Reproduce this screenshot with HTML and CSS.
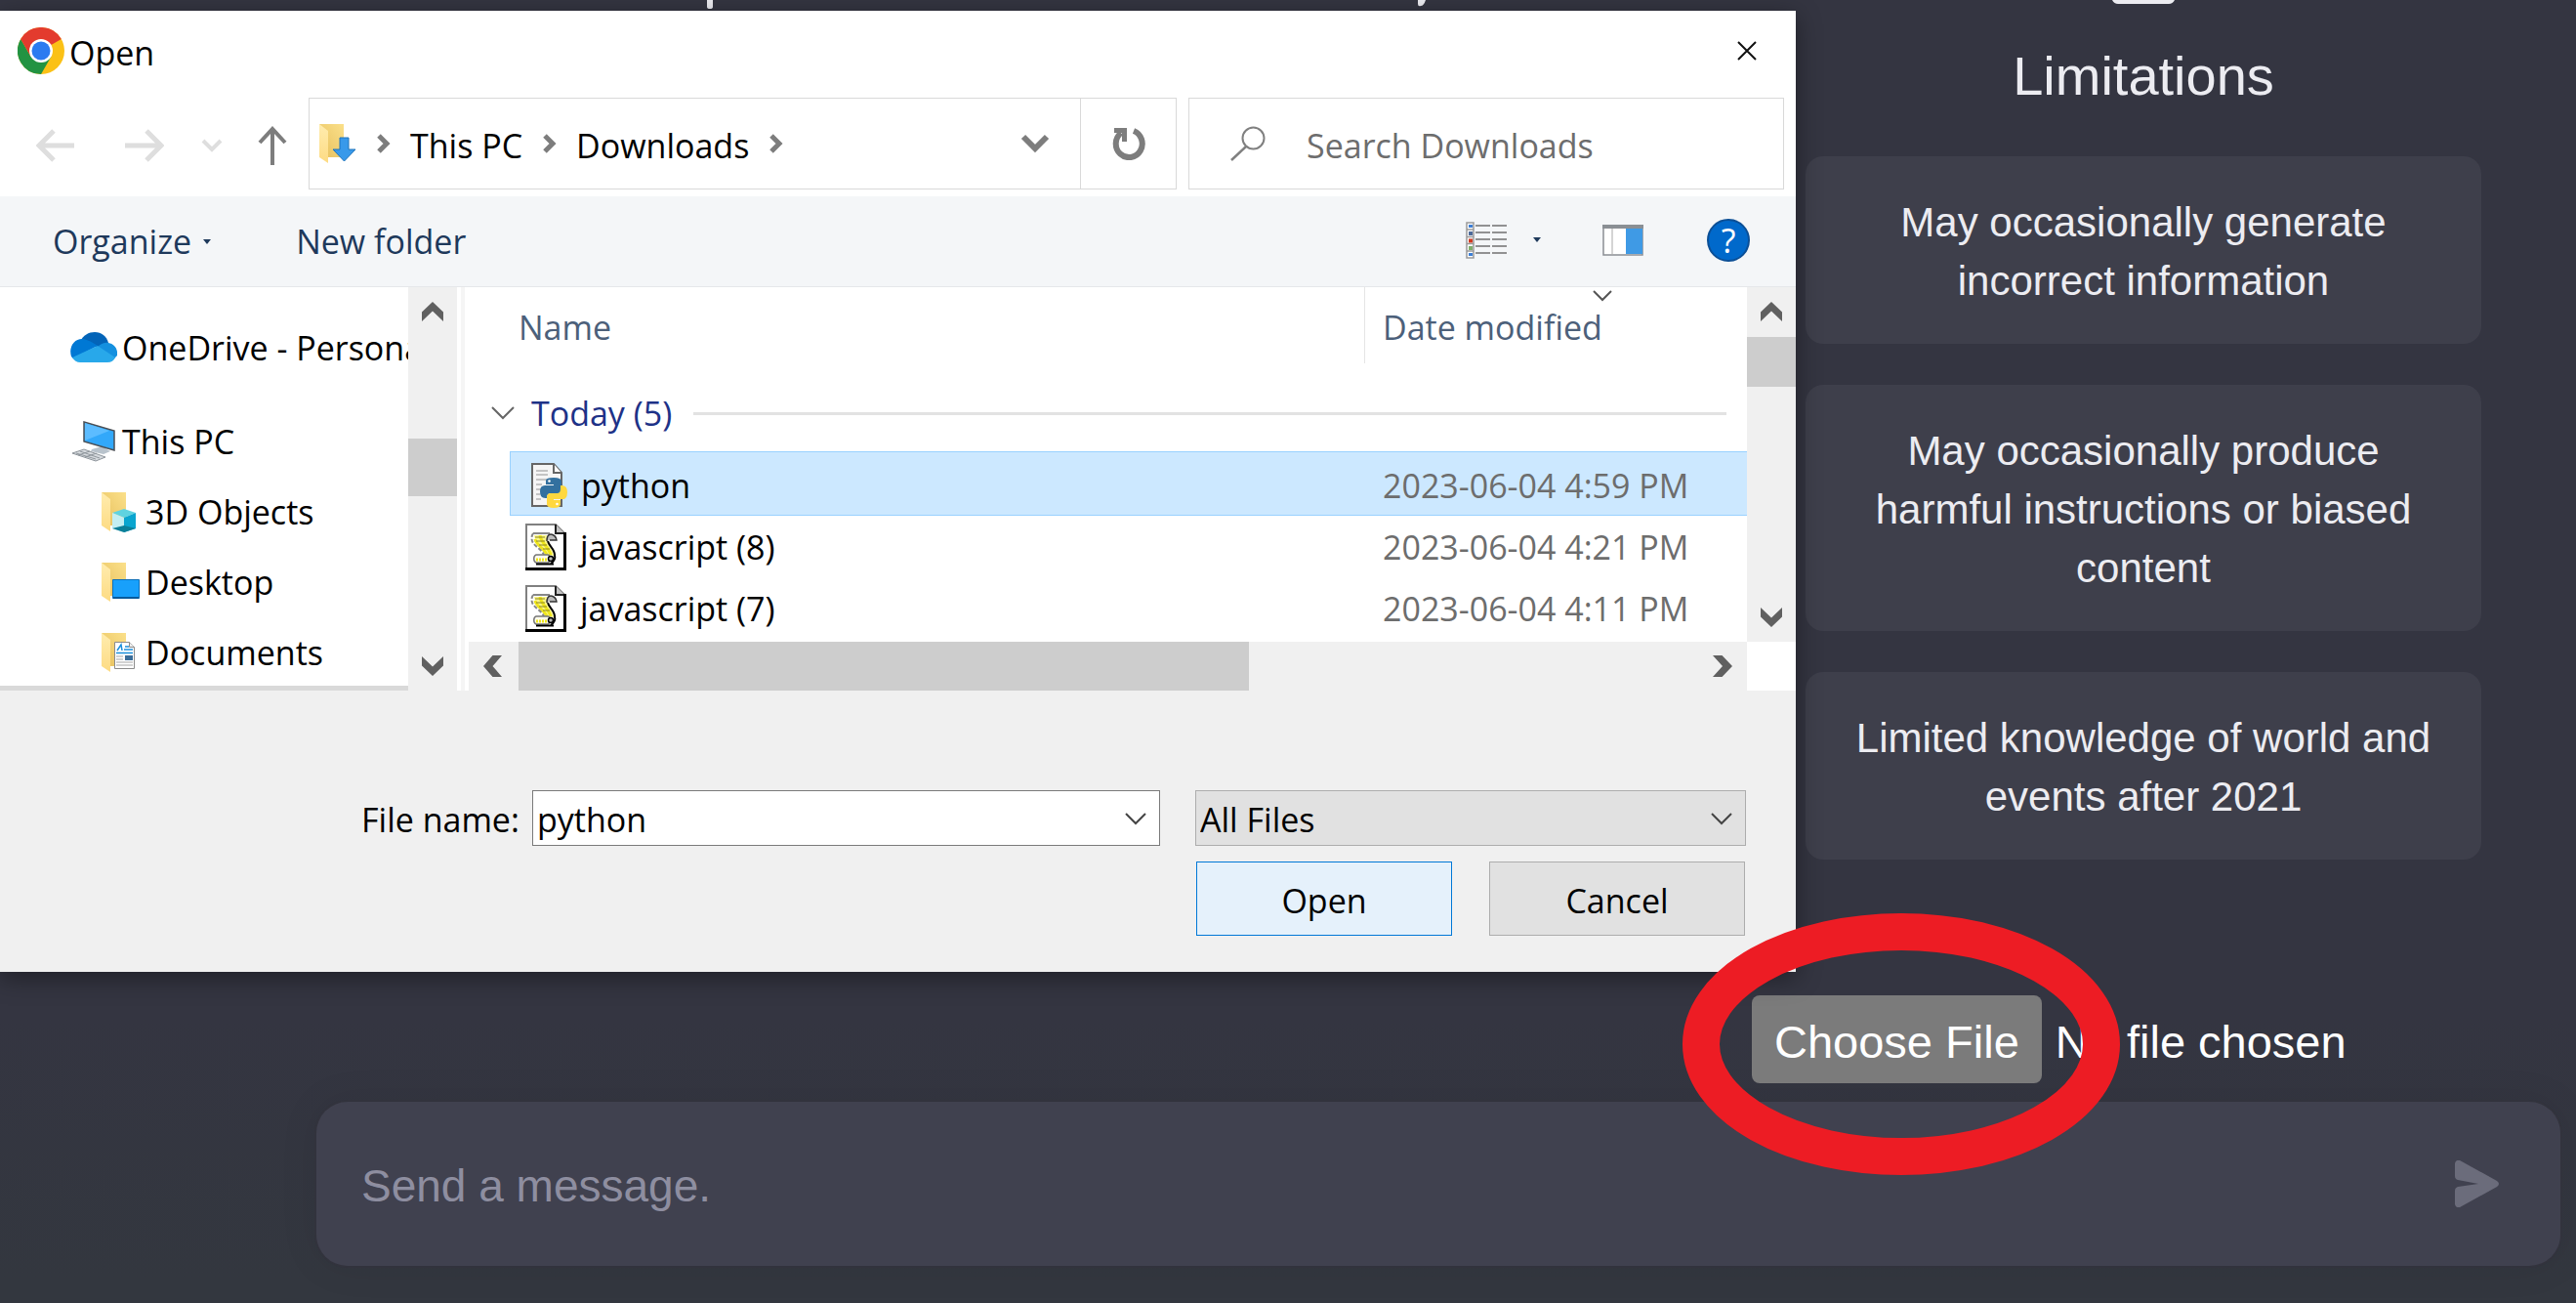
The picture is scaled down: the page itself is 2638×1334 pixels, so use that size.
FILE: index.html
```html
<!DOCTYPE html>
<html lang="en">
<head>
<meta charset="utf-8">
<title>Choose a file</title>
<link rel="stylesheet" href="styles.css">
</head>
<body>
<svg width="0" height="0" class="defs" aria-hidden="true">
  <defs>
    <linearGradient id="back" x1="1" y1="0" x2="0" y2="1"><stop offset="0" stop-color="#fbe08a"/><stop offset="1" stop-color="#e6bf5c"/></linearGradient>
    <linearGradient id="front" x1="0" y1="0" x2="0" y2="1"><stop offset="0" stop-color="#ffecae"/><stop offset="1" stop-color="#fddb83"/></linearGradient>
    <symbol id="folder" viewBox="0 0 40 42">
      <path d="M0 1h25v34H8z" fill="url(#back)"/>
      <path d="M0 1l9 7v33l-9-6z" fill="url(#front)"/>
    </symbol>
    <symbol id="thin-down" viewBox="0 0 24 14"><path d="M2 2l10 10L22 2" fill="none" stroke="#444" stroke-width="2"/></symbol>
    <symbol id="fat-up" viewBox="0 0 22 20"><path d="M0 10.500L11 0l11 10.500V20L11 9.500 0 20z" fill="#606060"/></symbol>
    <symbol id="fat-down" viewBox="0 0 22 20"><path d="M0 9.500L11 20 22 9.500V0L11 10.500 0 0z" fill="#606060"/></symbol>
    <symbol id="crumb" viewBox="0 0 14 20"><path d="M2 2l8 8-8 8" fill="none" stroke="#7d7d7d" stroke-width="5"/></symbol>
    <symbol id="script" viewBox="0 0 42 48">
      <path d="M1 1h30l9 9v36H1z" fill="#fff" stroke="#808080" stroke-width="2"/>
      <path d="M31 1v9h9" fill="#c4c4c4" stroke="#222" stroke-width="2"/>
      <path d="M40.500 9v38M0 46.500h42" stroke="#000" stroke-width="3"/>
      <path d="M8 10h16l-1 7c1 5 7 8 7 15 1 4-1 8-4 9H11c-3-1-3-8 0-9h7c0-5-10-8-11-15z" fill="#fff"/>
      <path d="M9 12h13c-2 8 7 14 7 21l-7-1c-2-6-12-9-13-20z" fill="#fbf68a"/>
      <path d="M10 16c1 6 9 9 12 16M15 12c1 8 9 12 11 20" fill="none" stroke="#efe61c" stroke-width="3"/>
      <path d="M8 10c-2 3-2 7 0 10 3 4 9 7 11 12" fill="none" stroke="#888" stroke-width="2" stroke-dasharray="4 2"/>
      <path d="M23 18c1 5 7 8 7 14 1 4-1 7-4 9" fill="none" stroke="#000" stroke-width="2"/>
      <path d="M8 10h17" stroke="#888" stroke-width="2"/>
      <path d="M10 14h10M11 18h9M14 22h8M18 26h7" stroke="#8a8520" stroke-width="1"/>
      <path d="M22 18c0-4 1-7 4-7s6 3 6 6h-7" fill="#bbb" stroke="#333" stroke-width="1.500"/>
      <path d="M11 32h12c3 0 3 7 0 8H11c-3-1-3-7 0-8z" fill="#fffef0" stroke="#777" stroke-width="1.500"/>
      <path d="M11 37h11" stroke="#efe61c" stroke-width="3" stroke-dasharray="2 1"/>
      <circle cx="26" cy="36" r="2.500" fill="#bbb" stroke="#000" stroke-width="1.500"/>
      <path d="M11 41.500h18" stroke="#000" stroke-width="2"/>
    </symbol>
  </defs>
</svg>

<main class="page">
  <svg class="page-glyphs" viewBox="0 0 740 10" aria-hidden="true">
    <path d="M0 0h6v7q0 2-3 2t-3-2z" fill="#ececf1"/>
    <path d="M728 0h8q-2 6-5 6-3 1-3-2z" fill="#ececf1"/>
  </svg>

  <section class="limits">
    <svg class="limits-icon" viewBox="0 0 64 4" aria-hidden="true"><path d="M0 0h64q-2 4-6 4H6Q2 4 0 0z" fill="#ececf1"/></svg>
    <h2 class="limits-title">Limitations</h2>
    <ul class="cards">
      <li class="card">May occasionally generate incorrect information</li>
      <li class="card">May occasionally produce harmful instructions or biased content</li>
      <li class="card">Limited knowledge of world and events after 2021</li>
    </ul>
  </section>

  <form class="composer">
    <div class="upload">
      <input class="upload-input" type="file" aria-label="Upload file">
      <svg class="ring" viewBox="0 0 448 268" aria-hidden="true"><ellipse cx="224" cy="134" rx="205" ry="115" fill="none" stroke="#ed1c24" stroke-width="38"/></svg>
    </div>
    <div class="message">
      <input class="message-input" type="text" placeholder="Send a message." aria-label="Message">
      <button class="send" type="button" aria-label="Send">
        <svg width="46" height="48" viewBox="0 0 46 48"><path d="M0 3Q1-1 5 0L43 21q4 3 0 6L5 48q-4 1-5-3V31q0-3 3-4l21-3L3 20q-3-1-3-4z" fill="#6b6c7b"/></svg>
      </button>
    </div>
  </form>
</main>

<section class="dialog" role="dialog" aria-label="Open">
  <header class="titlebar">
    <svg width="48" height="48" viewBox="0 0 48 48" aria-hidden="true">
      <circle cx="24" cy="24" r="24" fill="#fbc116"/>
      <path d="M24 24L3.200 12A24 24 0 0 1 44.800 12z" fill="#e33b2e"/>
      <path d="M3.200 12A24 24 0 0 0 24 48l10.400-18L24 24 13.600 30z" fill="#229342"/>
      <path d="M3.200 12L13.600 30 24 24V12z" fill="#e33b2e"/>
      <circle cx="24" cy="24" r="12" fill="#fff"/>
      <circle cx="24" cy="24" r="9.500" fill="#2b7bf0"/>
    </svg>
    <h1 class="title">Open</h1>
    <button class="close" type="button" aria-label="Close"><svg width="20" height="20" viewBox="0 0 20 20"><path d="M1 1l18 18M19 1L1 19" stroke="#111" stroke-width="2"/></svg></button>
  </header>

  <div class="navbar">
    <div class="history">
      <button class="plain" type="button" aria-label="Back"><svg width="40" height="34" viewBox="0 0 40 34"><path d="M39 17H4M18 2L3 17l15 15" fill="none" stroke="#dedede" stroke-width="5"/></svg></button>
      <button class="plain forward" type="button" aria-label="Forward"><svg width="40" height="34" viewBox="0 0 40 34"><path d="M0 17h36M22 2l15 15-15 15" fill="none" stroke="#dedede" stroke-width="5"/></svg></button>
      <button class="plain recent" type="button" aria-label="Recent locations"><svg width="22" height="14" viewBox="0 0 22 14"><path d="M2 2l9 9 9-9" fill="none" stroke="#dedede" stroke-width="4"/></svg></button>
      <button class="plain up" type="button" aria-label="Up"><svg width="30" height="40" viewBox="0 0 30 40"><path d="M15 40V3M2 17L15 3l13 14" fill="none" stroke="#7d7d7d" stroke-width="4"/></svg></button>
    </div>
    <div class="address">
      <svg class="address-icon" width="38" height="42" viewBox="0 0 38 42" aria-hidden="true"><use href="#folder" width="40" height="42"/><path d="M21 15h9v12h7L25.500 39 14 27h7z" fill="#3899ea" stroke="#1f74bb" stroke-width="1"/></svg>
      <svg class="crumb" width="14" height="20"><use href="#crumb"/></svg>
      <a class="place" href="#pc">This PC</a>
      <svg class="crumb" width="14" height="20"><use href="#crumb"/></svg>
      <a class="place" href="#downloads">Downloads</a>
      <svg class="crumb" width="14" height="20"><use href="#crumb"/></svg>
      <button class="plain address-drop" type="button" aria-label="Previous locations"><svg width="30" height="20" viewBox="0 0 30 20"><path d="M3 3l12 12L27 3" fill="none" stroke="#7d7d7d" stroke-width="6"/></svg></button>
      <button class="refresh" type="button" aria-label="Refresh"><svg width="34" height="34" viewBox="0 0 34 34"><path d="M22 4A13.500 14 0 1 1 9 6" fill="none" stroke="#7d7d7d" stroke-width="6"/><path d="M2 1h13v14h-5V6H2z" fill="#7d7d7d"/></svg></button>
    </div>
    <label class="search">
      <svg width="36" height="36" viewBox="0 0 36 36" aria-hidden="true"><circle cx="23.500" cy="12.500" r="11" fill="none" stroke="#808080" stroke-width="2"/><path d="M16 21L1 35" stroke="#808080" stroke-width="2.500"/></svg>
      <input class="search-input" type="text" placeholder="Search Downloads" aria-label="Search Downloads">
    </label>
  </div>

  <div class="toolbar">
    <button class="tool" type="button">Organize <svg class="tool-caret" width="8" height="5" viewBox="0 0 8 5"><path d="M0 0h8L4 5z" fill="#1e395b"/></svg></button>
    <button class="tool" type="button">New folder</button>
    <div class="views">
      <button class="plain view-mode" type="button" aria-label="Change view">
        <svg width="42" height="38" viewBox="0 0 42 38">
          <path d="M1 1h7v36H1zM1 8h7M1 15.500h7M1 22.500h7M1 30h7" fill="#fff" stroke="#9a9a9a" stroke-width="1.500"/>
          <path d="M3 3h4v3H3z" fill="#3d7fd6"/><path d="M3 10h4v4H3z" fill="#4d6a9a"/><path d="M3 17.500h4v4H3z" fill="#d03a20"/><path d="M3 25h4v4H3z" fill="#7fae6b"/><path d="M3 32h4v3H3z" fill="#3d7fd6"/>
          <path d="M10 4h15M27 4h15M10 11h15M27 11h15M10 18h15M27 18h15M10 25h15M27 25h15M10 32h15M27 32h15" stroke="#707070" stroke-width="1.500"/>
        </svg>
      </button>
      <button class="plain view-drop" type="button" aria-label="More view options"><svg width="10" height="5" viewBox="0 0 8 5"><path d="M0 0h8L4 5z" fill="#1e395b"/></svg></button>
      <button class="plain preview" type="button" aria-label="Preview pane"><svg width="42" height="32" viewBox="0 0 42 32"><path d="M1 1h40v30H1z" fill="#fff" stroke="#8a8f94" stroke-width="1.500"/><path d="M0 0h42v4H0z" fill="#8a8f94"/><path d="M10 4v27" stroke="#aaa" stroke-width="1"/><path d="M24 4h17v26H24z" fill="#3f9ae5"/></svg></button>
      <button class="help" type="button" aria-label="Help">?</button>
    </div>
  </div>

  <div class="body">
    <nav class="tree">
      <a class="node node-gap" href="#onedrive">
        <svg width="48" height="32" viewBox="0 0 48 32" aria-hidden="true"><path d="M10 10C13 3 19 0 25 0c7 0 12 4 14 11l-9 5z" fill="#0364b8"/><path d="M1 25C-2 15 4 7 12 7c4 0 8 2 16 7L3 27z" fill="#0078d4"/><path d="M28 15q6-5 11-4c6 1 10 6 9 13l-3 3z" fill="#1490df"/><path d="M2 26l26-12 18 12q-2 5-8 5H10q-5 0-8-5z" fill="#28a8ea"/></svg>
        <span>OneDrive - Personal</span>
      </a>
      <a class="node" href="#pc">
        <svg width="48" height="42" viewBox="0 0 48 42" aria-hidden="true"><path d="M22 29l10-3 9 5-7 3-13-3z" fill="#b9c3cc"/><path d="M14 1l31 9v20L14 21z" fill="#32a8fa" stroke="#4a4f55" stroke-width="1.500"/><path d="M15 20L40 10 15 2z" fill="#5cbcff"/><path d="M2 33l12-4 22 8-10 4z" fill="#d5d9dd" stroke="#8f969c" stroke-width="1"/><path d="M6 33l20 6M10 31l20 7M8 35l12-4M15 37l12-4" stroke="#8f969c" stroke-width="1"/></svg>
        <span>This PC</span>
      </a>
      <a class="node node-child" href="#objects">
        <svg width="40" height="42" viewBox="0 0 40 42" aria-hidden="true"><use href="#folder"/><path d="M11 22l12-4 12 4-12 5z" fill="#5fd3e0"/><path d="M11 22l12 5v15l-12-4z" fill="#c3eef2"/><path d="M23 27l12-5v16l-12 4z" fill="#0aa5cf"/><path d="M23 35l12 3-12 4-12-4z" fill="#0c7f98"/></svg>
        <span>3D Objects</span>
      </a>
      <a class="node node-child" href="#desktop">
        <svg width="40" height="42" viewBox="0 0 40 42" aria-hidden="true"><use href="#folder"/><path d="M11.500 18.500h27v19h-27z" fill="#18a0fb" stroke="#0d6fb8"/><path d="M12 37h26" stroke="#075a9c" stroke-width="2"/></svg>
        <span>Desktop</span>
      </a>
      <a class="node node-child" href="#documents">
        <svg width="40" height="42" viewBox="0 0 40 42" aria-hidden="true"><use href="#folder"/><path d="M13.500 10.500h15l5 5v22h-20z" fill="#fff" stroke="#8b8b8b"/><path d="M28.500 10.500v5h5" fill="#eee" stroke="#8b8b8b"/><path d="M16 19l4-6 1 6M24 15h4M23 18h9M15 21.500h17" stroke="#1a8fdc" stroke-width="1.500" fill="none"/><path d="M24 24h8v5h-8z" fill="#3b6d99"/><path d="M15 25h7M15 28h7M15 31h17M15 34h17" stroke="#a5a5a5"/></svg>
        <span>Documents</span>
      </a>
    </nav>
    <div class="vbar">
      <svg width="22" height="20"><use href="#fat-up"/></svg>
      <div class="vthumb vthumb-tree"></div>
      <svg class="bar-end" width="22" height="20"><use href="#fat-down"/></svg>
    </div>
    <div class="splitter"></div>

    <div class="listing">
      <div class="files">
        <table class="table">
          <colgroup><col class="col-lead"><col class="col-name"><col></colgroup>
          <thead>
            <tr class="head"><td></td><th scope="col">Name</th><th class="head-date" scope="col">Date modified<svg class="sort" width="20" height="12" viewBox="0 0 20 12" aria-hidden="true"><path d="M1 1l9 9 9-9" fill="none" stroke="#555" stroke-width="2"/></svg></th></tr>
          </thead>
          <tbody>
            <tr><td class="group" colspan="3"><div class="group-row"><svg width="30" height="14" viewBox="0 0 30 14" aria-hidden="true"><path d="M4 1l11 11L26 1" fill="none" stroke="#666" stroke-width="2"/></svg><span>Today (5)</span><span class="rule"></span></div></td></tr>
            <tr class="file selected"><td></td>
              <td><div class="file-name"><svg width="42" height="48" viewBox="0 0 42 48" aria-hidden="true"><path d="M6 2h22l8 9v34H6z" fill="#f5f5f5" stroke="#666" stroke-width="2"/><path d="M28 2v9h8" fill="#fff" stroke="#666" stroke-width="2"/><path d="M10 9h12M10 13h12M10 18h14M10 23h6M10 28h5M10 33h4M10 38h5" stroke="#b4b4b4" stroke-width="1.500"/><path d="M20 23v-4q0-3 8-3t8 4v8q0 4-4 4h-7q-4 0-4 5-7 1-7-7 0-6 5-6h9v-1z" fill="#33709f"/><path d="M36 24q7-1 7 7t-6 7h-8v1h7v4q0 4-7 4t-7-4v-7q0-4 4-4h7q3 0 3-5z" fill="#ffd83f" transform="translate(-1 0)"/><circle cx="23.500" cy="19.500" r="1.300" fill="#fff"/><circle cx="31.500" cy="43" r="1.300" fill="#fff"/></svg><span>python</span></div></td>
              <td class="date">2023-06-04 4:59 PM</td></tr>
            <tr class="file"><td></td>
              <td><div class="file-name"><svg width="42" height="48" aria-hidden="true"><use href="#script"/></svg><span>javascript (8)</span></div></td>
              <td class="date">2023-06-04 4:21 PM</td></tr>
            <tr class="file"><td></td>
              <td><div class="file-name"><svg width="42" height="48" aria-hidden="true"><use href="#script"/></svg><span>javascript (7)</span></div></td>
              <td class="date">2023-06-04 4:11 PM</td></tr>
          </tbody>
        </table>
      </div>
      <div class="vbar">
        <svg width="22" height="20"><use href="#fat-up"/></svg>
        <div class="vthumb vthumb-files"></div>
        <svg class="bar-end" width="22" height="20"><use href="#fat-down"/></svg>
      </div>
      <div class="hbar">
        <svg width="20" height="22" viewBox="0 0 20 22"><path d="M9.500 0L0 11l9.500 11H19L9.500 11 19 0z" fill="#606060"/></svg>
        <div class="hthumb"></div>
        <svg class="hbar-end" width="20" height="22" viewBox="0 0 20 22"><path d="M9.500 0L20 11 9.500 22H0l10-11L0 0z" fill="#606060"/></svg>
      </div>
      <div class="corner"></div>
    </div>
  </div>

  <form class="footer">
    <label class="name-label" for="filename">File name:</label>
    <div class="combo">
      <input class="field" id="filename" type="text" value="python">
      <svg class="combo-caret" width="24" height="14" aria-hidden="true"><use href="#thin-down"/></svg>
    </div>
    <div class="actions">
      <div class="combo">
        <select class="field type" aria-label="File type"><option>All Files</option></select>
        <svg class="combo-caret" width="24" height="14" aria-hidden="true"><use href="#thin-down"/></svg>
      </div>
      <div class="buttons">
        <button class="btn btn-primary" type="button">Open</button>
        <button class="btn" type="button">Cancel</button>
      </div>
    </div>
  </form>
</section>
</body>
</html>
```
FILE: styles.css
```css
* { box-sizing: border-box; }

body {
  position: relative;
  margin: 0;
  min-height: 100vh;
  background: #343541;
  font-family: "Liberation Sans", Arial, sans-serif;
  color: #ececf1;
}

svg { display: block; flex: none; }
button, input, select { font: inherit; color: inherit; }
a { color: inherit; text-decoration: none; }

.defs { position: absolute; }
.plain { padding: 0; border: 0; background: none; }

/* Chat page */
.page {
  display: flex;
  flex-direction: column;
  min-height: 100vh;
  background: linear-gradient(#343541 1040px, #33373f 1310px);
}

.page-glyphs { position: absolute; top: 0; left: 724px; width: 740px; height: 10px; }

.limits { width: 692px; margin: 0 97px 0 auto; }
.limits-icon { width: 64px; height: 4px; margin: 0 auto; }
.limits-title { margin: 42px 0 50px; font-size: 56px; font-weight: 400; line-height: 64px; text-align: center; }

.cards { display: flex; flex-direction: column; gap: 42px; margin: 0; padding: 0; list-style: none; }
.card {
  padding: 38px 40px 34px;
  border-radius: 18px;
  background: #3e3f4b;
  font-size: 42px;
  line-height: 60px;
  text-align: center;
}

.composer { display: flex; flex-direction: column; gap: 19px; margin-top: auto; padding: 0 16px 38px 324px; }

.upload { position: relative; align-self: flex-end; width: 828px; height: 90px; color: #fff; }
.upload-input { display: block; width: 100%; height: 90px; font-size: 47px; line-height: 92px; }
.upload-input::file-selector-button {
  height: 90px;
  margin: 0 14px 0 0;
  padding: 2px 23px 0;
  border: 0;
  border-radius: 8px;
  background: #7b7b7b;
  color: #fff;
  font: inherit;
}
.ring { position: absolute; z-index: 3; top: -84px; left: -71px; width: 448px; height: 268px; pointer-events: none; }

.message {
  display: flex;
  align-items: center;
  height: 168px;
  padding: 0 62px 0 46px;
  border-radius: 32px;
  background: #40414f;
  box-shadow: 0 0 0 2px #32333d, 0 0 40px rgba(0, 0, 0, .08);
}
.message-input { flex: 1; min-width: 0; height: 64px; padding: 4px 0 0; border: 0; outline: 0; background: none; font-size: 46px; }
.message-input::placeholder { color: #8e8ea0; opacity: 1; }
.send { padding: 0; border: 0; background: none; }

/* File picker window */
.dialog {
  position: absolute;
  z-index: 1;
  top: 11px;
  left: 0;
  right: 799px;
  background: #fff;
  color: #000;
  font-family: "Open Sans", "Noto Sans", sans-serif;
  font-size: 34px;
  line-height: 48px;
  box-shadow: 0 6px 24px rgba(0, 0, 0, .4);
}

.titlebar { display: flex; align-items: center; gap: 5px; height: 89px; padding: 0 40px 7px 18px; }
.title { margin: 4px 0 0; font-size: 34px; font-weight: 400; }
.close { margin-left: auto; padding: 0; border: 0; background: none; }

.navbar { display: flex; align-items: center; height: 94px; padding-right: 12px; }
.history { display: flex; align-items: center; flex: none; width: 316px; padding: 4px 0 0 37px; }
.forward { margin-left: 51px; }
.recent { margin-left: 38px; }
.up { margin-left: 36px; }

.address { display: flex; align-items: center; flex: 1; height: 94px; padding-left: 10px; border: 1px solid #d9d9d9; }
.address-icon { margin-right: 21px; }
.crumb { margin: 0 20px 0 0; }
.place { margin-right: 21px; padding-top: 3px; }
.address-drop { margin: 0 31px 0 auto; }
.refresh { display: grid; place-items: center; width: 98px; height: 92px; padding: 0; border: 0; border-left: 1px solid #d9d9d9; background: none; }

.search { display: flex; align-items: center; gap: 42px; width: 610px; height: 94px; margin-left: 12px; padding: 0 20px 0 42px; border: 1px solid #d9d9d9; }
.search-input { flex: 1; min-width: 0; padding: 3px 0 0; border: 0; outline: 0; background: none; }
.search-input::placeholder { color: #6d6d6d; opacity: 1; }

.toolbar {
  display: flex;
  align-items: center;
  gap: 87px;
  height: 93px;
  margin-top: 7px;
  padding: 0 47px 0 54px;
  border-bottom: 1px solid #e5e7ea;
  background: #f4f6f8;
  color: #1e395b;
}
.tool { display: flex; align-items: center; gap: 12px; padding: 0; border: 0; background: none; }
.views { display: flex; align-items: center; margin-left: auto; padding-bottom: 3px; }
.view-drop { margin-left: 26px; }
.preview { margin-left: 62px; }
.help {
  width: 44px;
  height: 44px;
  margin-left: 65px;
  padding: 0;
  border: 2px solid #0b4f96;
  border-radius: 50%;
  background: #0069cb;
  color: #fff;
  font-size: 34px;
  line-height: 40px;
}

.body { display: flex; height: 413px; }

.tree { flex: none; width: 418px; padding-top: 26px; overflow: hidden; border-bottom: 5px solid #d9d9d9; white-space: nowrap; }
.node { display: flex; align-items: center; gap: 5px; height: 72px; padding-left: 72px; }
.node-gap { margin-bottom: 24px; }
.node-child { padding-left: 104px; }

.vbar { display: flex; flex-direction: column; align-items: center; flex: none; width: 50px; padding: 15px 0; background: #f0f0f0; }
.vthumb { width: 50px; background: #cdcdcd; }
.vthumb-tree { height: 59px; margin-top: 120px; }
.vthumb-files { height: 51px; margin-top: 16px; }
.bar-end { margin-top: auto; }

.splitter { flex: none; width: 12px; border: solid #fff; border-width: 0 4px; background: #f5f5f5; }

.listing { display: grid; flex: 1; grid-template-columns: 1fr 50px; grid-template-rows: 363px 50px; min-width: 0; }
.files { padding-left: 20px; overflow: hidden; }

.table { width: 100%; table-layout: fixed; border-spacing: 0; }
.table td, .table th { padding: 0; font-weight: 400; text-align: left; }
.col-lead { width: 22px; }
.col-name { width: 875px; }

.table .head th { position: relative; height: 78px; padding: 4px 0 0 9px; color: #4c607a; }
.table .head .head-date { padding-left: 18px; border-left: 1px solid #e5e5e5; }
.sort { position: absolute; top: 3px; left: 233px; }

.group-row { display: flex; align-items: center; height: 90px; padding: 12px 21px 0 0; gap: 14px; color: #1e3287; }
.rule { flex: 1; height: 3px; margin-left: 8px; background: #e2e2e2; }

.file td { height: 63px; }
.file-name { display: flex; align-items: center; gap: 14px; padding-left: 16px; }
.table .date { padding-left: 19px; color: #6d6d6d; }
.selected td { height: 66px; }
.table .selected td + td { padding-top: 3px; border: solid #99d1ff; border-width: 1px 0; background: #cce8ff; }
.table .selected td:nth-child(2) { border-left-width: 1px; }

.hbar { display: flex; align-items: center; background: #f0f0f0; padding: 0 15px; }
.hthumb { width: 748px; height: 50px; margin-left: 16px; background: #cdcdcd; }
.hbar-end { margin-left: auto; }
.corner { background: #fff; }

.footer {
  display: flex;
  align-items: flex-start;
  height: 288px;
  padding: 102px 51px 0 370px;
  background: #f0f0f0;
}
.name-label { flex: none; width: 175px; line-height: 60px; }
.combo { position: relative; flex: 1; }
.field {
  display: block;
  width: 100%;
  height: 57px;
  padding: 2px 60px 0 4px;
  border: 1px solid #7a7a7a;
  border-radius: 0;
  outline: 0;
  background: #fff;
}
.type { appearance: none; border-color: #adadad; background: #e1e1e1; }
.combo-caret { position: absolute; top: 22px; right: 13px; pointer-events: none; }

.actions { display: flex; flex-direction: column; gap: 16px; width: 564px; margin-left: 36px; }
.buttons { display: flex; justify-content: space-between; padding: 0 1px; }
.btn { width: 262px; height: 76px; padding: 4px 0 0; border: 1px solid #adadad; background: #e1e1e1; }
.btn-primary { border-color: #0078d7; background: #e5f1fb; }
```
